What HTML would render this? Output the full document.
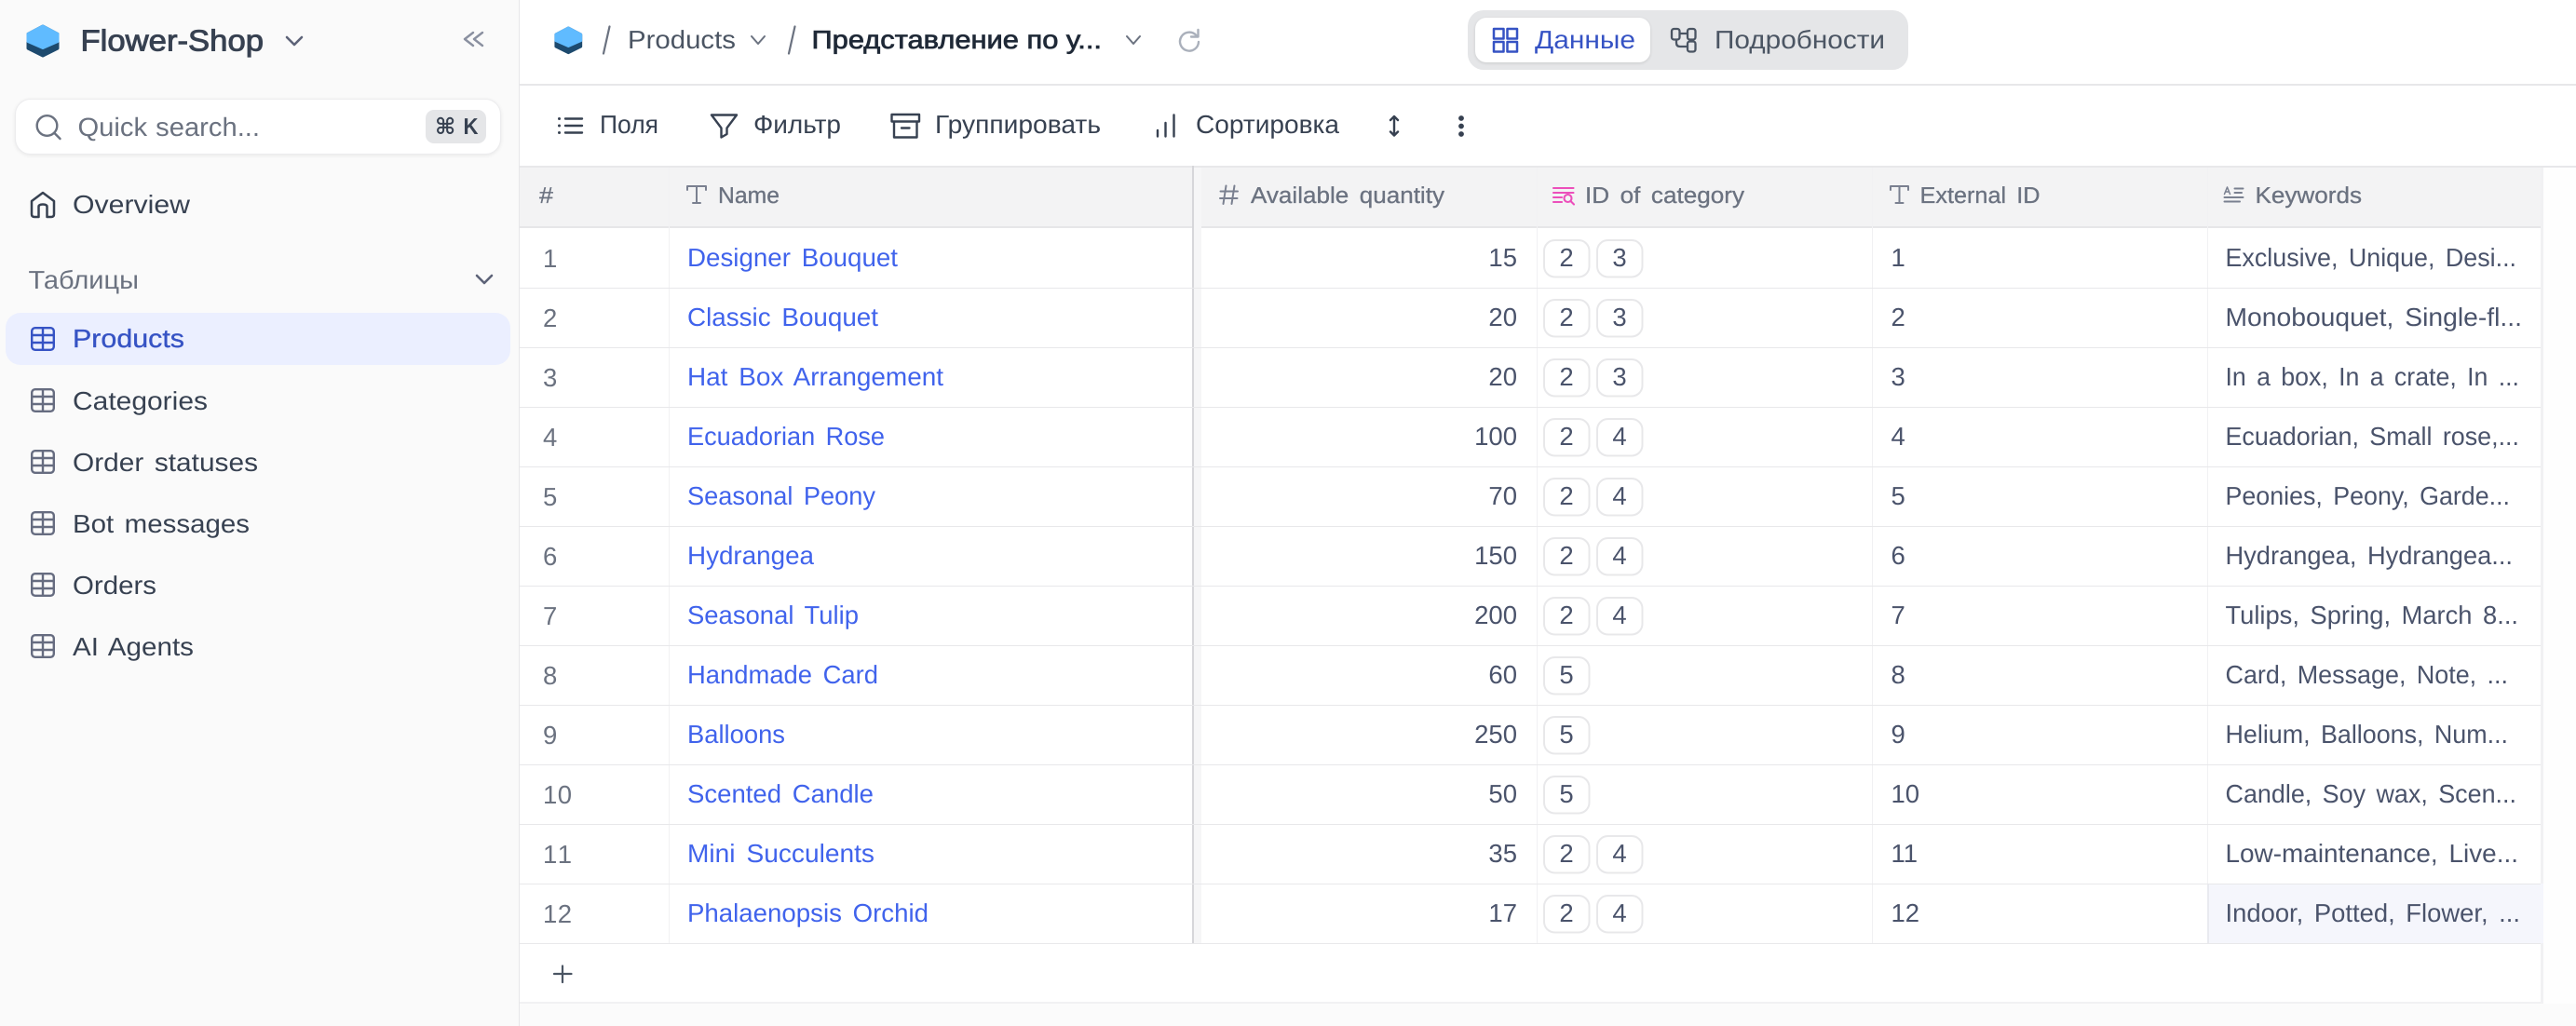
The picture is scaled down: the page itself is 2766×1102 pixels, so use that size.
<!DOCTYPE html>
<html lang="ru">
<head>
<meta charset="utf-8">
<title>Flower-Shop</title>
<style>
html,body{margin:0;padding:0;width:2766px;height:1102px;overflow:hidden;background:#fff}
.b{position:absolute;box-sizing:border-box}
svg{position:absolute;left:0;top:0}
text{font-family:"Liberation Sans","DejaVu Sans","Noto Sans CJK SC",sans-serif;font-size:27.5px;word-spacing:4px;text-rendering:geometricPrecision;white-space:pre}
.side{fill:#374151;word-spacing:3px}
.med{stroke-width:.35px;paint-order:stroke}
.hd{font-size:24.5px;fill:#6b7280;stroke:#6b7280;stroke-width:.3px}
.num{fill:#6b7280}
.nm{fill:#4063ec}
.cell{fill:#4a536b}
.tb{fill:none;stroke:#374151;stroke-width:2.4;stroke-linecap:round;stroke-linejoin:round}
.hi{fill:none;stroke:#7a8090;stroke-width:2;stroke-linecap:round;stroke-linejoin:round}
</style>
</head>
<body>
<!-- backgrounds -->
<div class="b" style="left:0;top:0;width:558px;height:1102px;background:#fafafa;border-right:1.5px solid #e7e7e9"></div>
<div class="b" style="left:558px;top:1078px;width:2208px;height:24px;background:#fbfbfb"></div>
<div class="b" style="left:2731px;top:180px;width:35px;height:898px;background:#fefefe"></div>
<div class="b" style="left:16px;top:106px;width:522px;height:60px;background:#fff;border-radius:17px;border:1px solid #ececee;box-shadow:0 1px 4px rgba(0,0,0,.08)"></div>
<div class="b" style="left:457px;top:118px;width:65px;height:36px;background:#e5e6e8;border-radius:9px"></div>
<div class="b" style="left:6px;top:336px;width:542px;height:56px;background:#ebefff;border-radius:16px"></div>
<div class="b" style="left:558px;top:90px;width:2208px;height:2px;background:#e7e7e9"></div>
<div class="b" style="left:1576px;top:11px;width:473px;height:64px;background:#e5e6e8;border-radius:17px"></div>
<div class="b" style="left:1584px;top:19px;width:188px;height:48px;background:#fff;border-radius:12px;box-shadow:0 1px 3px rgba(0,0,0,.12)"></div>
<!-- table header -->
<div class="b" style="left:558px;top:178px;width:2208px;height:2px;background:#e8e8ea"></div>
<div class="b" style="left:558px;top:180px;width:2170px;height:65px;background:#f3f3f4;border-bottom:2px solid #e6e6e8"></div>
<div class="b" style="left:2728px;top:180px;width:3px;height:898px;background:#f1f1f3"></div>
<div class="b" style="left:558px;top:1076px;width:2173px;height:2px;background:#f1f1f3"></div>
<!-- last row highlight -->
<div class="b" style="left:2370px;top:949px;width:361px;height:64px;background:#f5f6fc;border-left:2px solid #e9eaf0"></div>
<!-- vertical cols -->
<div class="b" style="left:717.5px;top:180px;width:1.5px;height:833px;background:#f1f1f3"></div>
<div class="b" style="left:1282px;top:180px;width:8px;height:833px;background:#f6f6f7"></div>
<div class="b" style="left:1280px;top:178px;width:2.4px;height:835px;background:#d6d6da"></div>
<div class="b" style="left:1649.5px;top:180px;width:1.5px;height:833px;background:#f1f1f3"></div>
<div class="b" style="left:2009.5px;top:180px;width:1.5px;height:833px;background:#f1f1f3"></div>
<div class="b" style="left:2369.5px;top:180px;width:1.5px;height:769px;background:#f1f1f3"></div>
<!-- row lines -->
<div class="b" style="left:558px;top:308.5px;width:2170px;height:1.5px;background:#e8e8ea"></div>
<div class="b" style="left:558px;top:372.5px;width:2170px;height:1.5px;background:#e8e8ea"></div>
<div class="b" style="left:558px;top:436.5px;width:2170px;height:1.5px;background:#e8e8ea"></div>
<div class="b" style="left:558px;top:500.5px;width:2170px;height:1.5px;background:#e8e8ea"></div>
<div class="b" style="left:558px;top:564.5px;width:2170px;height:1.5px;background:#e8e8ea"></div>
<div class="b" style="left:558px;top:628.5px;width:2170px;height:1.5px;background:#e8e8ea"></div>
<div class="b" style="left:558px;top:692.5px;width:2170px;height:1.5px;background:#e8e8ea"></div>
<div class="b" style="left:558px;top:756.5px;width:2170px;height:1.5px;background:#e8e8ea"></div>
<div class="b" style="left:558px;top:820.5px;width:2170px;height:1.5px;background:#e8e8ea"></div>
<div class="b" style="left:558px;top:884.5px;width:2170px;height:1.5px;background:#e8e8ea"></div>
<div class="b" style="left:558px;top:948.5px;width:2170px;height:1.5px;background:#e8e8ea"></div>
<div class="b" style="left:558px;top:1012.5px;width:2170px;height:1.5px;background:#e8e8ea"></div>

<svg width="2766" height="1102" viewBox="0 0 2766 1102" xmlns="http://www.w3.org/2000/svg">
<defs>
<g id="hex">
<path d="M18 2 L34 10.500 V26 L18 34 L2 26 V10.500 Z" fill="#1d4a6e" stroke="#1d4a6e" stroke-width="3" stroke-linejoin="round"/>
<path d="M18 2 L34 10.500 V18.500 L18 25.500 L2 18.500 V10.500 Z" fill="#60bbff" stroke="#60bbff" stroke-width="3" stroke-linejoin="round"/>
</g>
<g id="tbl">
<rect x="1.2" y="1.2" width="23.6" height="23.6" rx="3.5"/>
<path d="M13 1.2 V24.8 M1.2 9 H24.8 M1.2 17 H24.8"/>
</g>
<g id="tag">
<rect x="1" y="1" width="48.5" height="39.5" rx="11.5" fill="#fff" stroke="#e8e8ea" stroke-width="2"/>
</g>
</defs>

<!-- sidebar -->
<use href="#hex" x="28" y="26"/>
<text x="86.500" y="54.500" style="font-size:32px;stroke:#374151;stroke-width:.9px" fill="#374151" textLength="196.500" lengthAdjust="spacingAndGlyphs">Flower-Shop</text>
<path d="M308 40 L316 48 L324 40" fill="none" stroke="#5d6378" stroke-width="2.6" stroke-linecap="round" stroke-linejoin="round"/>
<path d="M508 35 L499 42 L508 49 M518 35 L509 42 L518 49" fill="none" stroke="#8a90a0" stroke-width="2.4" stroke-linecap="round" stroke-linejoin="round"/>
<circle cx="50.5" cy="135" r="10.8" fill="none" stroke="#6b7280" stroke-width="2.4"/>
<path d="M58.5 143 L64.5 149" stroke="#6b7280" stroke-width="2.4" stroke-linecap="round"/>
<text x="83.500" y="146" fill="#6b7280" textLength="195.500" lengthAdjust="spacingAndGlyphs" style="font-size:28px;word-spacing:1px">Quick search...</text>
<text x="467" y="144" font-weight="700" style="font-size:24px;word-spacing:0" fill="#374151">⌘</text>
<text x="497.5" y="144" font-weight="700" style="font-size:24.5px" fill="#374151" textLength="16" lengthAdjust="spacingAndGlyphs">K</text>
<path d="M34 216 L46 207 L58 216 V230 Q58 233 55 233 H50.5 V222 Q50.5 219.500 46 219.500 Q41.500 219.500 41.500 222 V233 H37 Q34 233 34 230 Z" fill="none" stroke="#374151" stroke-width="2.5" stroke-linejoin="round"/>
<text x="78" y="229" class="side" textLength="126" lengthAdjust="spacingAndGlyphs">Overview</text>
<text x="30.500" y="310" fill="#6b7280" textLength="118.500" lengthAdjust="spacingAndGlyphs">Таблицы</text>
<path d="M512 296 L520 304 L528 296" fill="none" stroke="#5d6378" stroke-width="2.6" stroke-linecap="round" stroke-linejoin="round"/>
<use href="#tbl" x="33" y="351" fill="none" stroke="#3653c4" stroke-width="2.4"/>
<text x="78" y="373" fill="#3653c4" stroke="#3653c4" class="med" textLength="120" lengthAdjust="spacingAndGlyphs">Products</text>
<use href="#tbl" x="33" y="417" fill="none" stroke="#666c80" stroke-width="2.4"/>
<text x="78" y="440" class="side" textLength="145" lengthAdjust="spacingAndGlyphs">Categories</text>
<use href="#tbl" x="33" y="483" fill="none" stroke="#666c80" stroke-width="2.4"/>
<text x="78" y="506" class="side" textLength="199" lengthAdjust="spacingAndGlyphs">Order statuses</text>
<use href="#tbl" x="33" y="549" fill="none" stroke="#666c80" stroke-width="2.4"/>
<text x="78" y="572" class="side" textLength="190" lengthAdjust="spacingAndGlyphs">Bot messages</text>
<use href="#tbl" x="33" y="615" fill="none" stroke="#666c80" stroke-width="2.4"/>
<text x="78" y="638" class="side" textLength="90" lengthAdjust="spacingAndGlyphs">Orders</text>
<use href="#tbl" x="33" y="681" fill="none" stroke="#666c80" stroke-width="2.4"/>
<text x="78" y="704" class="side" textLength="130" lengthAdjust="spacingAndGlyphs">AI Agents</text>

<!-- top bar -->
<use href="#hex" transform="translate(595 28) scale(.85)"/>
<path d="M654.500 28.500 L648 57.500 M853.500 28.500 L847 57.500" stroke="#6b7280" stroke-width="2.2" stroke-linecap="round"/>
<text x="674" y="52" fill="#4b5563" textLength="116" lengthAdjust="spacingAndGlyphs">Products</text>
<path d="M807 39 L814 47 L821 39 M1210 39 L1217 47 L1224 39" fill="none" stroke="#6b7280" stroke-width="2" stroke-linecap="round" stroke-linejoin="round"/>
<text x="871.500" y="52" fill="#1f2937" style="stroke:#1f2937;stroke-width:.75px;word-spacing:0" textLength="311.500" lengthAdjust="spacingAndGlyphs">Представление по у...</text>
<path d="M1284.500 38 A10 10 0 1 0 1287 45" fill="none" stroke="#aab0bb" stroke-width="2.4" stroke-linecap="round"/>
<path d="M1286.500 32 V39.500 H1279" fill="none" stroke="#aab0bb" stroke-width="2.4" stroke-linecap="round" stroke-linejoin="round"/>

<path d="M1604 31 h10.500 v10.500 h-10.500z M1618.500 31 h10.500 v10.500 h-10.500z M1604 45 h10.500 v10.500 h-10.500z M1618.500 45 h10.500 v10.500 h-10.500z" fill="none" stroke="#3653c4" stroke-width="2.5" stroke-linejoin="round"/>
<text x="1648" y="52" fill="#3653c4" textLength="108" lengthAdjust="spacingAndGlyphs">Данные</text>
<rect x="1795" y="31" width="8.500" height="11.500" rx="2.500" fill="none" stroke="#4b5563" stroke-width="2.300"/>
<rect x="1812" y="31" width="8.500" height="11.500" rx="2.500" fill="none" stroke="#4b5563" stroke-width="2.300"/>
<rect x="1812" y="44.500" width="8.500" height="11" rx="2.500" fill="none" stroke="#4b5563" stroke-width="2.300"/>
<path d="M1803.500 36 H1812 M1800 42.500 V46 Q1800 50 1804 50 H1812" fill="none" stroke="#4b5563" stroke-width="2.300"/>
<text x="1841" y="52" fill="#4b5563" textLength="183" lengthAdjust="spacingAndGlyphs">Подробности</text>

<!-- toolbar -->
<path class="tb" d="M607 127.500 H625 M607 135 H625 M607 142.500 H625"/>
<circle cx="600.500" cy="127.500" r="1.500" fill="#374151"/><circle cx="600.500" cy="135" r="1.500" fill="#374151"/><circle cx="600.500" cy="142.500" r="1.500" fill="#374151"/>
<text x="644" y="143" class="side" textLength="63" lengthAdjust="spacingAndGlyphs">Поля</text>
<path class="tb" d="M764 123.500 H791 L780.500 137.500 V144 L774.500 147.500 V137.500 Z"/>
<text x="809" y="143" class="side" textLength="94" lengthAdjust="spacingAndGlyphs">Фильтр</text>
<path class="tb" d="M957.500 123 H987 V130.500 H957.500 Z M960 130.500 V147.500 H984.500 V130.500 M968 137.500 H976.500"/>
<text x="1004" y="143" class="side" textLength="178" lengthAdjust="spacingAndGlyphs">Группировать</text>
<path class="tb" d="M1243 140 V146.500 M1251.500 132 V146.500 M1260.500 123.500 V146.500"/>
<text x="1284" y="143" class="side" textLength="154" lengthAdjust="spacingAndGlyphs">Сортировка</text>
<path class="tb" d="M1497 125.500 V145 M1493 129 L1497 125 L1501 129 M1493 141.500 L1497 145.500 L1501 141.500"/>
<circle cx="1569" cy="127" r="2.900" fill="#374151"/><circle cx="1569" cy="135.500" r="2.900" fill="#374151"/><circle cx="1569" cy="144" r="2.900" fill="#374151"/>

<!-- header -->
<text x="579" y="218" class="hd" textLength="15" lengthAdjust="spacingAndGlyphs">#</text>
<path class="hi" d="M738 204 V200 H758 V204 M748 200 V218 M744 218 H752"/>
<text x="771" y="218" class="hd" textLength="66" lengthAdjust="spacingAndGlyphs">Name</text>
<path class="hi" d="M1316.500 199.500 L1313.500 219 M1325.500 199.500 L1322.500 219 M1310.500 205.500 H1329 M1310 213 H1328.500"/>
<text x="1343" y="218" class="hd" textLength="208" lengthAdjust="spacingAndGlyphs">Available quantity</text>
<path fill="none" stroke="#ec4fbb" stroke-width="2.100" stroke-linecap="round" d="M1668 202 H1689.500 M1668 207 H1689.500 M1668 212 H1677 M1668 217 H1677"/>
<circle cx="1683.500" cy="213" r="4" fill="none" stroke="#ec4fbb" stroke-width="2.100"/>
<path d="M1686.500 216 L1690 219.500" stroke="#ec4fbb" stroke-width="2.100" stroke-linecap="round"/>
<text x="1702" y="218" class="hd" textLength="171" lengthAdjust="spacingAndGlyphs">ID of category</text>
<path class="hi" d="M2030 204 V200 H2049 V204 M2039.500 200 V218 M2035.500 218 H2043.500"/>
<text x="2061.500" y="218" class="hd" textLength="129" lengthAdjust="spacingAndGlyphs">External ID</text>
<path class="hi" d="M2399.500 202.500 H2408.500 M2399.500 207 H2407 M2388.500 212 H2408.500 M2388.500 216.500 H2405"/>
<path class="hi" style="stroke-width:1.500" d="M2388.500 208.500 L2391.500 201 L2394.500 208.500 M2389.700 206 H2393.300"/>
<text x="2421.500" y="218" class="hd" textLength="114.500" lengthAdjust="spacingAndGlyphs">Keywords</text>

<!-- row 1 -->
<text x="583" y="287" class="num">1</text>
<text x="738" y="286" class="nm" textLength="226" lengthAdjust="spacingAndGlyphs">Designer Bouquet</text>
<text x="1629" y="286" class="cell" text-anchor="end">15</text>
<use href="#tag" x="1657" y="257"/><text x="1682" y="286" class="cell" text-anchor="middle">2</text>
<use href="#tag" x="1714" y="257"/><text x="1739" y="286" class="cell" text-anchor="middle">3</text>
<text x="2030.500" y="286" class="cell">1</text>
<text x="2389.500" y="286" class="cell" textLength="312.500" lengthAdjust="spacingAndGlyphs">Exclusive, Unique, Desi...</text>
<!-- row 2 -->
<text x="583" y="351" class="num">2</text>
<text x="738" y="350" class="nm" textLength="205" lengthAdjust="spacingAndGlyphs">Classic Bouquet</text>
<text x="1629" y="350" class="cell" text-anchor="end">20</text>
<use href="#tag" x="1657" y="321"/><text x="1682" y="350" class="cell" text-anchor="middle">2</text>
<use href="#tag" x="1714" y="321"/><text x="1739" y="350" class="cell" text-anchor="middle">3</text>
<text x="2030.500" y="350" class="cell">2</text>
<text x="2389.500" y="350" class="cell" textLength="318.500" lengthAdjust="spacingAndGlyphs">Monobouquet, Single-fl...</text>
<!-- row 3 -->
<text x="583" y="415" class="num">3</text>
<text x="738" y="414" class="nm" textLength="275" lengthAdjust="spacingAndGlyphs">Hat Box Arrangement</text>
<text x="1629" y="414" class="cell" text-anchor="end">20</text>
<use href="#tag" x="1657" y="385"/><text x="1682" y="414" class="cell" text-anchor="middle">2</text>
<use href="#tag" x="1714" y="385"/><text x="1739" y="414" class="cell" text-anchor="middle">3</text>
<text x="2030.500" y="414" class="cell">3</text>
<text x="2389.500" y="414" class="cell" textLength="315.500" lengthAdjust="spacingAndGlyphs">In a box, In a crate, In ...</text>
<!-- row 4 -->
<text x="583" y="479" class="num">4</text>
<text x="738" y="478" class="nm" textLength="212" lengthAdjust="spacingAndGlyphs">Ecuadorian Rose</text>
<text x="1629" y="478" class="cell" text-anchor="end">100</text>
<use href="#tag" x="1657" y="449"/><text x="1682" y="478" class="cell" text-anchor="middle">2</text>
<use href="#tag" x="1714" y="449"/><text x="1739" y="478" class="cell" text-anchor="middle">4</text>
<text x="2030.500" y="478" class="cell">4</text>
<text x="2389.500" y="478" class="cell" textLength="315.500" lengthAdjust="spacingAndGlyphs">Ecuadorian, Small rose,...</text>
<!-- row 5 -->
<text x="583" y="543" class="num">5</text>
<text x="738" y="542" class="nm" textLength="202" lengthAdjust="spacingAndGlyphs">Seasonal Peony</text>
<text x="1629" y="542" class="cell" text-anchor="end">70</text>
<use href="#tag" x="1657" y="513"/><text x="1682" y="542" class="cell" text-anchor="middle">2</text>
<use href="#tag" x="1714" y="513"/><text x="1739" y="542" class="cell" text-anchor="middle">4</text>
<text x="2030.500" y="542" class="cell">5</text>
<text x="2389.500" y="542" class="cell" textLength="305.500" lengthAdjust="spacingAndGlyphs">Peonies, Peony, Garde...</text>
<!-- row 6 -->
<text x="583" y="607" class="num">6</text>
<text x="738" y="606" class="nm" textLength="136" lengthAdjust="spacingAndGlyphs">Hydrangea</text>
<text x="1629" y="606" class="cell" text-anchor="end">150</text>
<use href="#tag" x="1657" y="577"/><text x="1682" y="606" class="cell" text-anchor="middle">2</text>
<use href="#tag" x="1714" y="577"/><text x="1739" y="606" class="cell" text-anchor="middle">4</text>
<text x="2030.500" y="606" class="cell">6</text>
<text x="2389.500" y="606" class="cell" textLength="308.500" lengthAdjust="spacingAndGlyphs">Hydrangea, Hydrangea...</text>
<!-- row 7 -->
<text x="583" y="671" class="num">7</text>
<text x="738" y="670" class="nm" textLength="184" lengthAdjust="spacingAndGlyphs">Seasonal Tulip</text>
<text x="1629" y="670" class="cell" text-anchor="end">200</text>
<use href="#tag" x="1657" y="641"/><text x="1682" y="670" class="cell" text-anchor="middle">2</text>
<use href="#tag" x="1714" y="641"/><text x="1739" y="670" class="cell" text-anchor="middle">4</text>
<text x="2030.500" y="670" class="cell">7</text>
<text x="2389.500" y="670" class="cell" textLength="314.500" lengthAdjust="spacingAndGlyphs">Tulips, Spring, March 8...</text>
<!-- row 8 -->
<text x="583" y="735" class="num">8</text>
<text x="738" y="734" class="nm" textLength="205" lengthAdjust="spacingAndGlyphs">Handmade Card</text>
<text x="1629" y="734" class="cell" text-anchor="end">60</text>
<use href="#tag" x="1657" y="705"/><text x="1682" y="734" class="cell" text-anchor="middle">5</text>
<text x="2030.500" y="734" class="cell">8</text>
<text x="2389.500" y="734" class="cell" textLength="303.500" lengthAdjust="spacingAndGlyphs">Card, Message, Note, ...</text>
<!-- row 9 -->
<text x="583" y="799" class="num">9</text>
<text x="738" y="798" class="nm" textLength="105" lengthAdjust="spacingAndGlyphs">Balloons</text>
<text x="1629" y="798" class="cell" text-anchor="end">250</text>
<use href="#tag" x="1657" y="769"/><text x="1682" y="798" class="cell" text-anchor="middle">5</text>
<text x="2030.500" y="798" class="cell">9</text>
<text x="2389.500" y="798" class="cell" textLength="303.500" lengthAdjust="spacingAndGlyphs">Helium, Balloons, Num...</text>
<!-- row 10 -->
<text x="583" y="863" class="num" textLength="31">10</text>
<text x="738" y="862" class="nm" textLength="200" lengthAdjust="spacingAndGlyphs">Scented Candle</text>
<text x="1629" y="862" class="cell" text-anchor="end">50</text>
<use href="#tag" x="1657" y="833"/><text x="1682" y="862" class="cell" text-anchor="middle">5</text>
<text x="2030.500" y="862" class="cell">10</text>
<text x="2389.500" y="862" class="cell" textLength="312.500" lengthAdjust="spacingAndGlyphs">Candle, Soy wax, Scen...</text>
<!-- row 11 -->
<text x="583" y="927" class="num" textLength="31">11</text>
<text x="738" y="926" class="nm" textLength="201" lengthAdjust="spacingAndGlyphs">Mini Succulents</text>
<text x="1629" y="926" class="cell" text-anchor="end">35</text>
<use href="#tag" x="1657" y="897"/><text x="1682" y="926" class="cell" text-anchor="middle">2</text>
<use href="#tag" x="1714" y="897"/><text x="1739" y="926" class="cell" text-anchor="middle">4</text>
<text x="2030.500" y="926" class="cell">11</text>
<text x="2389.500" y="926" class="cell" textLength="314.500" lengthAdjust="spacingAndGlyphs">Low-maintenance, Live...</text>
<!-- row 12 -->
<text x="583" y="991" class="num" textLength="31">12</text>
<text x="738" y="990" class="nm" textLength="259" lengthAdjust="spacingAndGlyphs">Phalaenopsis Orchid</text>
<text x="1629" y="990" class="cell" text-anchor="end">17</text>
<use href="#tag" x="1657" y="961"/><text x="1682" y="990" class="cell" text-anchor="middle">2</text>
<use href="#tag" x="1714" y="961"/><text x="1739" y="990" class="cell" text-anchor="middle">4</text>
<text x="2030.500" y="990" class="cell">12</text>
<text x="2389.500" y="990" class="cell" textLength="316.500" lengthAdjust="spacingAndGlyphs">Indoor, Potted, Flower, ...</text>

<path d="M604 1037.500 V1055 M595 1046 H613.500" stroke="#4b5563" stroke-width="2.200" stroke-linecap="round"/>
</svg>
</body>
</html>
